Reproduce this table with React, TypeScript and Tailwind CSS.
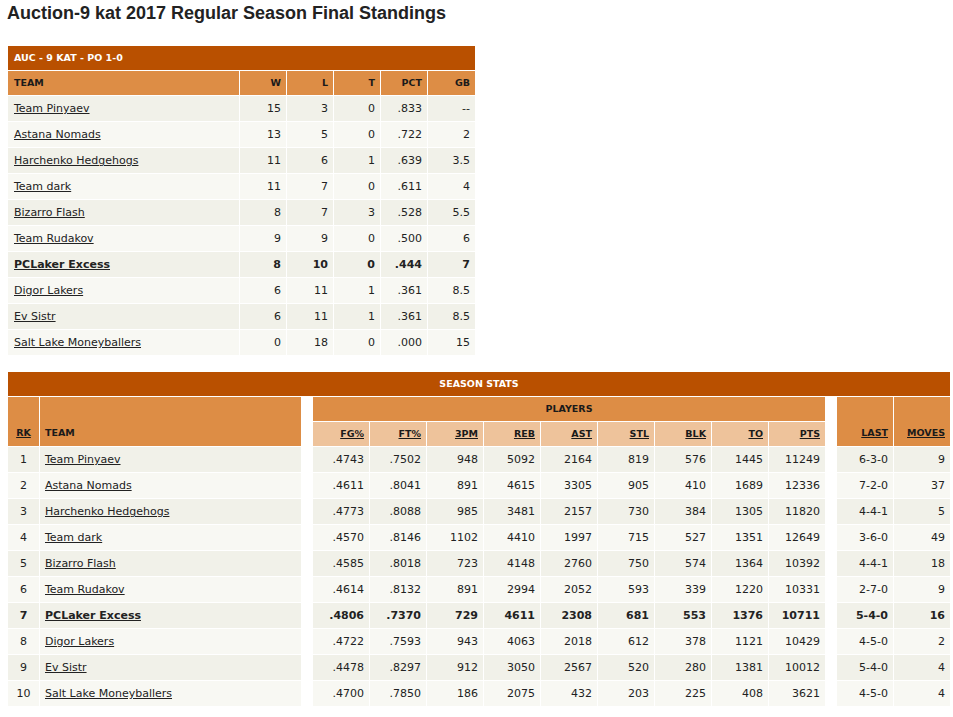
const standings = [
  { team: 'Team Pinyaev', w: 15, l: 3, t: 0, pct: '.833', gb: '--' },
  { team: 'Astana Nomads', w: 13, l: 5, t: 0, pct: '.722', gb: '2' },
  { team: 'Harchenko Hedgehogs', w: 11, l: 6, t: 1, pct: '.639', gb: '3.5' },
  { team: 'Team dark', w: 11, l: 7, t: 0, pct: '.611', gb: '4' },
  { team: 'Bizarro Flash', w: 8, l: 7, t: 3, pct: '.528', gb: '5.5' },
  { team: 'Team Rudakov', w: 9, l: 9, t: 0, pct: '.500', gb: '6' },
  { team: 'PCLaker Excess', w: 8, l: 10, t: 0, pct: '.444', gb: '7', me: true },
  { team: 'Digor Lakers', w: 6, l: 11, t: 1, pct: '.361', gb: '8.5' },
  { team: 'Ev Sistr', w: 6, l: 11, t: 1, pct: '.361', gb: '8.5' },
  { team: 'Salt Lake Moneyballers', w: 0, l: 18, t: 0, pct: '.000', gb: '15' },
];

// fg, ft, 3pm, reb, ast, stl, blk, to, pts
const stats: { team: string; v: (string | number)[]; last: string; moves: number; me?: boolean }[] = [
  { team: 'Team Pinyaev', v: ['.4743', '.7502', 948, 5092, 2164, 819, 576, 1445, 11249], last: '6-3-0', moves: 9 },
  { team: 'Astana Nomads', v: ['.4611', '.8041', 891, 4615, 3305, 905, 410, 1689, 12336], last: '7-2-0', moves: 37 },
  { team: 'Harchenko Hedgehogs', v: ['.4773', '.8088', 985, 3481, 2157, 730, 384, 1305, 11820], last: '4-4-1', moves: 5 },
  { team: 'Team dark', v: ['.4570', '.8146', 1102, 4410, 1997, 715, 527, 1351, 12649], last: '3-6-0', moves: 49 },
  { team: 'Bizarro Flash', v: ['.4585', '.8018', 723, 4148, 2760, 750, 574, 1364, 10392], last: '4-4-1', moves: 18 },
  { team: 'Team Rudakov', v: ['.4614', '.8132', 891, 2994, 2052, 593, 339, 1220, 10331], last: '2-7-0', moves: 9 },
  { team: 'PCLaker Excess', v: ['.4806', '.7370', 729, 4611, 2308, 681, 553, 1376, 10711], last: '5-4-0', moves: 16, me: true },
  { team: 'Digor Lakers', v: ['.4722', '.7593', 943, 4063, 2018, 612, 378, 1121, 10429], last: '4-5-0', moves: 2 },
  { team: 'Ev Sistr', v: ['.4478', '.8297', 912, 3050, 2567, 520, 280, 1381, 10012], last: '5-4-0', moves: 4 },
  { team: 'Salt Lake Moneyballers', v: ['.4700', '.7850', 186, 2075, 432, 203, 225, 408, 3621], last: '4-5-0', moves: 4 },
];

const statCols = ['FG%', 'FT%', '3PM', 'REB', 'AST', 'STL', 'BLK', 'TO', 'PTS'];

const rowBg = (i: number) => (i % 2 === 0 ? 'bg-[#f1f1e9]' : 'bg-[#f8f8f3]');

export default function App() {
  return (
    <div className="min-h-[717px] bg-white text-[#222] font-['DejaVu_Sans',Verdana,sans-serif]">
      <h1 className="h-[27px] pl-[7px] pt-[2px] font-['Liberation_Sans',Arial,sans-serif] text-[18px] font-bold leading-[22px] text-[#222]">
        Auction-9 kat 2017 Regular Season Final Standings
      </h1>

      {/* standings */}
      <div className="mt-[18px] pl-[7px]">
        <table className="border-separate border-spacing-[1px] text-[11px]">
          <thead>
            <tr className="h-[24px] bg-[#b95000]">
              <th colSpan={6} className="pl-[6px] pr-[5px] text-left text-[9.5px] font-bold text-white">
                AUC - 9 KAT - PO 1-0
              </th>
            </tr>
            <tr className="h-[24px] bg-[#dd8d45] text-[9.5px] font-bold text-[#1a1a1a]">
              <th className="w-[231px] pl-[6px] pr-[5px] text-left">TEAM</th>
              <th className="w-[46px] px-[5px] text-right">W</th>
              <th className="w-[46px] px-[5px] text-right">L</th>
              <th className="w-[46px] px-[5px] text-right">T</th>
              <th className="w-[46px] px-[5px] text-right">PCT</th>
              <th className="w-[47px] px-[5px] text-right">GB</th>
            </tr>
          </thead>
          <tbody>
            {standings.map((s, i) => (
              <tr key={s.team} className={`h-[25px] ${rowBg(i)} ${s.me ? 'font-bold' : ''}`}>
                <td className="pl-[6px] pr-[5px] pt-[2px] text-left">
                  <a className="underline">{s.team}</a>
                </td>
                <td className="px-[5px] pt-[2px] text-right">{s.w}</td>
                <td className="px-[5px] pt-[2px] text-right">{s.l}</td>
                <td className="px-[5px] pt-[2px] text-right">{s.t}</td>
                <td className="px-[5px] pt-[2px] text-right">{s.pct}</td>
                <td className="px-[5px] pt-[2px] text-right">{s.gb}</td>
              </tr>
            ))}
          </tbody>
        </table>
      </div>

      {/* season stats */}
      <div className="mt-[15px] pl-[7px]">
        <table className="border-separate border-spacing-[1px] text-[11px]">
          <thead className="text-[9.5px] font-bold text-[#1a1a1a]">
            <tr className="h-[24px] bg-[#b95000]">
              <th colSpan={15} className="text-center text-white">
                SEASON STATS
              </th>
            </tr>
            <tr className="h-[24px]">
              <th rowSpan={2} className="w-[31px] bg-[#dd8d45] pb-[6px] align-bottom text-center">
                <a className="underline">RK</a>
              </th>
              <th rowSpan={2} className="w-[261px] bg-[#dd8d45] px-[5px] pb-[6px] align-bottom text-left">
                TEAM
              </th>
              <th rowSpan={2} className="w-[10px] bg-white" />
              <th colSpan={9} className="bg-[#dd8d45] text-center">
                PLAYERS
              </th>
              <th rowSpan={2} className="w-[10px] bg-white" />
              <th rowSpan={2} className="w-[56px] bg-[#dd8d45] px-[5px] pb-[6px] align-bottom text-right">
                <a className="underline">LAST</a>
              </th>
              <th rowSpan={2} className="w-[56px] bg-[#dd8d45] px-[5px] pb-[6px] align-bottom text-right">
                <a className="underline">MOVES</a>
              </th>
            </tr>
            <tr className="h-[24px]">
              {statCols.map((c) => (
                <th key={c} className="w-[56px] bg-[#eec39b] px-[5px] text-right">
                  <a className="underline">{c}</a>
                </th>
              ))}
            </tr>
          </thead>
          <tbody>
            {stats.map((s, i) => (
              <tr key={s.team} className={`h-[25px] ${s.me ? 'font-bold' : ''}`}>
                <td className={`${rowBg(i)} pt-[2px] text-center`}>{i + 1}</td>
                <td className={`${rowBg(i)} px-[5px] pt-[2px] text-left`}>
                  <a className="underline">{s.team}</a>
                </td>
                <td className="bg-white" />
                {s.v.map((v, j) => (
                  <td key={j} className={`${rowBg(i)} px-[5px] pt-[2px] text-right`}>
                    {v}
                  </td>
                ))}
                <td className="bg-white" />
                <td className={`${rowBg(i)} px-[5px] pt-[2px] text-right`}>{s.last}</td>
                <td className={`${rowBg(i)} px-[5px] pt-[2px] text-right`}>{s.moves}</td>
              </tr>
            ))}
          </tbody>
        </table>
      </div>
    </div>
  );
}
